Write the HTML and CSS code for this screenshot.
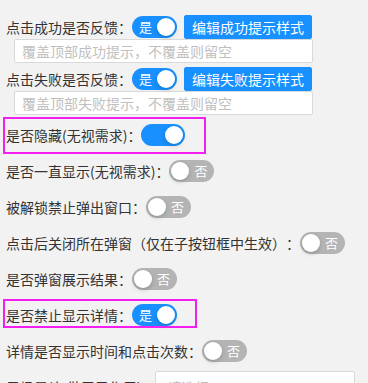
FILE: index.html
```html
<!DOCTYPE html>
<html lang="zh-CN">
<head>
<meta charset="utf-8">
<link rel="stylesheet" href="styles.css">
</head>
<body>
<div class="panel">
  <div class="block">
    <div class="line">
      <span class="label">点击成功是否反馈：</span>
      <span class="switch on"><span class="inner">是</span><span class="handle"></span></span>
      <button class="btn">编辑成功提示样式</button>
    </div>
    <div class="input"><span class="ph">覆盖顶部成功提示，不覆盖则留空</span></div>
  </div>
  <div class="block">
    <div class="line">
      <span class="label">点击失败是否反馈：</span>
      <span class="switch on"><span class="inner">是</span><span class="handle"></span></span>
      <button class="btn">编辑失败提示样式</button>
    </div>
    <div class="input"><span class="ph">覆盖顶部失败提示，不覆盖则留空</span></div>
  </div>
  <div class="rows">
    <div class="row">
      <span class="label">是否隐藏(无视需求)：</span>
      <span class="switch on"><span class="inner"></span><span class="handle"></span></span>
      <span class="mark mark-a"></span>
    </div>
    <div class="row">
      <span class="label">是否一直显示(无视需求)：</span>
      <span class="switch"><span class="handle"></span><span class="inner">否</span></span>
    </div>
    <div class="row">
      <span class="label">被解锁禁止弹出窗口：</span>
      <span class="switch"><span class="handle"></span><span class="inner">否</span></span>
    </div>
    <div class="row">
      <span class="label">点击后关闭所在弹窗（仅在子按钮框中生效）：</span>
      <span class="switch"><span class="handle"></span><span class="inner">否</span></span>
    </div>
    <div class="row">
      <span class="label">是否弹窗展示结果：</span>
      <span class="switch"><span class="handle"></span><span class="inner">否</span></span>
    </div>
    <div class="row">
      <span class="label">是否禁止显示详情：</span>
      <span class="switch on"><span class="inner">是</span><span class="handle"></span></span>
      <span class="mark mark-b"></span>
    </div>
    <div class="row">
      <span class="label">详情是否显示时间和点击次数：</span>
      <span class="switch"><span class="handle"></span><span class="inner">否</span></span>
    </div>
    <div class="row">
      <span class="label">子场景(仅做展示作用)：</span>
      <div class="select"><span class="ph">请选择</span></div>
    </div>
  </div>
</div>
</body>
</html>
```
FILE: styles.css
```css
* { box-sizing: border-box; }
html, body {
  margin: 0;
  padding: 0;
  background: #f2f2f2;
  overflow: hidden;
}
body {
  font-family: "Noto Sans CJK SC", "Noto Sans", sans-serif;
  font-size: 14px;
  color: #333;
  text-spacing-trim: space-all;
}
.panel {
  padding: 15px 0 0 6px;
}
.block {
  margin-bottom: 4px;
}
.block:nth-child(2) {
  margin-bottom: 2px;
}
.line {
  display: flex;
  align-items: center;
  height: 24px;
}
.label {
  white-space: nowrap;
  line-height: 22px;
}
.switch {
  position: relative;
  display: inline-flex;
  align-items: center;
  flex: none;
  min-width: 44px;
  height: 22px;
  border-radius: 11px;
  background: #b4b4b4;
  color: #fff;
  font-size: 13px;
  line-height: 22px;
}
.switch.on {
  background: #1890ff;
}
.switch .inner {
  display: block;
  padding: 0 7px 0 25px;
}
.switch.on .inner {
  padding: 0 25px 0 7px;
}
.switch .handle {
  position: absolute;
  top: 2px;
  left: 2px;
  width: 18px;
  height: 18px;
  border-radius: 50%;
  background: #fff;
  box-shadow: 0 2px 4px rgba(0, 35, 11, 0.2);
}
.switch.on .handle {
  left: auto;
  right: 2px;
}
.btn {
  margin-left: 7px;
  height: 24px;
  padding: 0 7px;
  border: 1px solid #1890ff;
  border-radius: 2px;
  background: #1890ff;
  color: #fff;
  font-family: inherit;
  font-size: 14px;
  line-height: 22px;
  white-space: nowrap;
}
.input {
  margin-left: 8px;
  width: 299px;
  height: 24px;
  padding: 0 7px;
  border: 1px solid #d9d9d9;
  border-radius: 2px;
  background: #fff;
  display: flex;
  align-items: center;
}
.ph {
  color: #bfbfbf;
  white-space: nowrap;
}
.row {
  position: relative;
  display: flex;
  align-items: center;
  height: 36px;
}
.select {
  width: 200px;
  height: 32px;
  padding: 0 11px;
  border: 1px solid #d9d9d9;
  border-radius: 2px;
  background: #fff;
  display: flex;
  align-items: center;
}
.mark {
  position: absolute;
  left: -3px;
  border: 2px solid #f21ff0;
  pointer-events: none;
}
.mark-a {
  top: 0;
  width: 203px;
  height: 37px;
}
.mark-b {
  top: 2px;
  width: 194px;
  height: 29px;
}
```
